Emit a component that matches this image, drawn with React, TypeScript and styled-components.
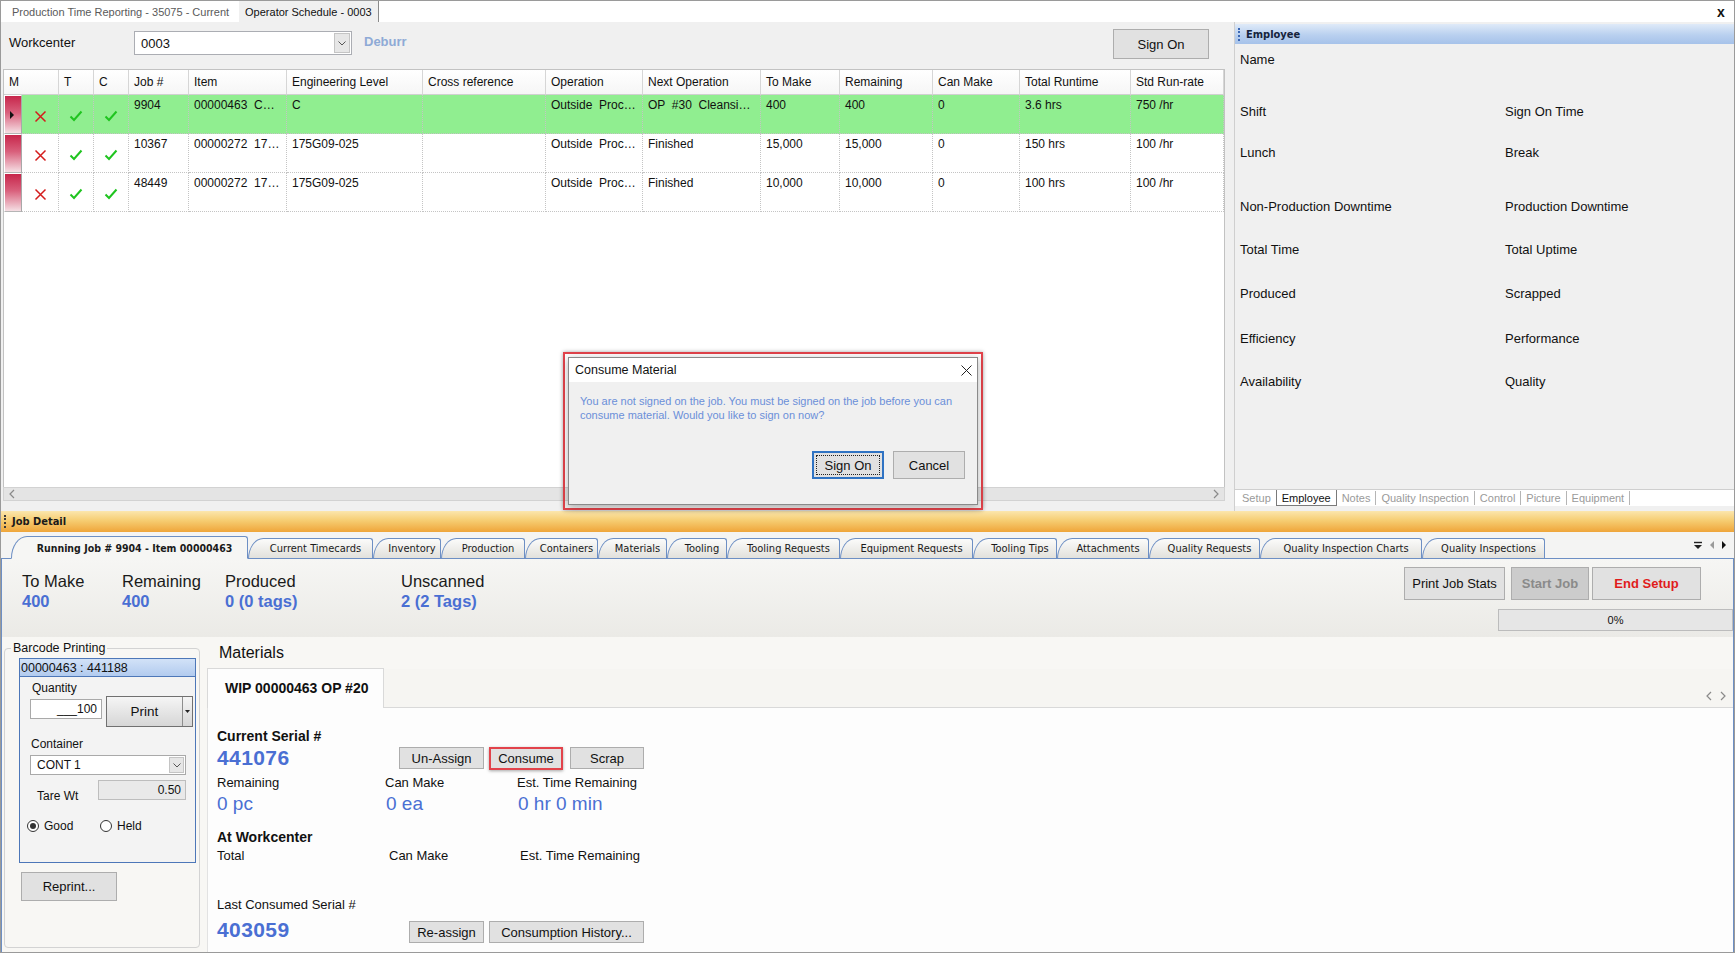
import React from "react";
import styled, { createGlobalStyle } from "styled-components";

const SANS = `"Liberation Sans", Arial, sans-serif`;
const TAHOMA = `"DejaVu Sans Condensed", "DejaVu Sans", "Liberation Sans", sans-serif`;
const BLUE = "#4a6fd3";
const TABLINE = "#6d8fc4";

const GlobalStyle = createGlobalStyle`
  html, body { margin: 0; padding: 0; background: #f0f0f0; }
  body { font-family: ${SANS}; color: #111; }
  *, *::before, *::after { box-sizing: border-box; }
`;

/* ---------- window ---------- */
const Window = styled.div`
  position: relative;
  width: 1735px;
  height: 953px;
  display: flex;
  flex-direction: column;
  background: #f0f0f0;
  border: 1px solid #9a9a9a;
  overflow: hidden;
  font-size: 13px;
`;

const DocTabs = styled.div`
  flex: none;
  height: 21px;
  display: flex;
  align-items: stretch;
  background: #fff;
  padding-left: 5px;
`;

const DocTab = styled.div<{ $active?: boolean }>`
  display: flex;
  align-items: center;
  padding: 0 6px;
  margin-left: ${(p) => (p.$active ? 4 : 0)}px;
  font-size: 11px;
  color: ${(p) => (p.$active ? "#111" : "#5a5a5a")};
  background: ${(p) => (p.$active ? "#f0f0f0" : "transparent")};
  border-right: ${(p) => (p.$active ? "1px solid #8a8a8a" : "none")};
  white-space: nowrap;
`;

const DocClose = styled.div`
  margin-left: auto;
  width: 24px;
  display: flex;
  align-items: center;
  justify-content: center;
  font-weight: 700;
  font-size: 14px;
  padding-right: 2px;
`;

/* ---------- upper area ---------- */
const Upper = styled.div`
  flex: none;
  height: 489px;
  display: flex;
`;

const LeftPane = styled.div`
  flex: none;
  width: 1224px;
  padding: 0 0 10px 2px;
  display: flex;
  flex-direction: column;
`;

const Toolbar = styled.div`
  flex: none;
  height: 47px;
  display: flex;
  align-items: flex-start;
`;

const WcLabel = styled.div`
  width: 125px;
  margin: 13px 0 0 6px;
  font-size: 13px;
  line-height: 16px;
`;

const Combo = styled.div`
  margin-top: 9px;
  width: 218px;
  height: 24px;
  display: flex;
  background: #fff;
  border: 1px solid #abadb3;
`;

const ComboText = styled.div`
  flex: 1;
  padding-left: 6px;
  display: flex;
  align-items: center;
  font-size: 13px;
`;

const ComboArrow = styled.div<{ $w?: number }>`
  width: ${(p) => p.$w ?? 16}px;
  margin: 1px;
  display: flex;
  align-items: center;
  justify-content: center;
  background: #e6e6e6;
  border: 1px solid #c4c4c4;
`;

const Deburr = styled.div`
  margin: 12px 0 0 12px;
  font-weight: 700;
  font-size: 13px;
  line-height: 16px;
  color: #8eaad6;
`;

const Btn = styled.button<{ $w: number; $h: number; $tone?: "red" | "disabled" }>`
  flex: none;
  width: ${(p) => p.$w}px;
  height: ${(p) => p.$h}px;
  padding: 0;
  font-family: ${SANS};
  font-size: 13px;
  font-weight: ${(p) => (p.$tone ? 700 : 400)};
  color: ${(p) => (p.$tone === "red" ? "#e01c1c" : p.$tone === "disabled" ? "#8a8a8a" : "#111")};
  background: ${(p) => (p.$tone === "disabled" ? "#cccccc" : "#e1e1e1")};
  border: 1px solid #adadad;
  cursor: default;
`;

const SignOnTop = styled(Btn)`
  margin: 7px 16px 0 auto;
`;

const COLS = "18px 37px 35px 35px 60px 98px 136px 123px 97px 118px 79px 93px 87px 111px 93px";

const GridBox = styled.div`
  flex: 1;
  display: grid;
  grid-template-columns: ${COLS};
  grid-auto-rows: min-content;
  align-content: start;
  background: #fff;
  border: 1px solid #c2c2c2;
  border-bottom: none;
  overflow: hidden;
`;

const HeadCell = styled.div<{ $span?: number }>`
  grid-column: span ${(p) => p.$span ?? 1};
  height: 25px;
  display: flex;
  align-items: center;
  padding-left: 5px;
  font-size: 12px;
  white-space: nowrap;
  background: linear-gradient(#ffffff, #f6f6f6);
  border-right: 1px solid #d6d6d6;
  border-bottom: 1px solid #d0d0d0;
`;

const Selector = styled.div`
  height: 39px;
  display: flex;
  align-items: center;
  padding-left: 5px;
  background: linear-gradient(180deg, #c7264b 0%, #d9607c 45%, #f5dfe4 100%);
  border: 1px solid #fff;
  border-right: 1px solid #a8a8a8;
  border-bottom: 1px solid #b5b5b5;
`;

const Pointer = styled.span`
  width: 0;
  height: 0;
  border-top: 4px solid transparent;
  border-bottom: 4px solid transparent;
  border-left: 4px solid #111;
`;

const Cell = styled.div<{ $hl?: boolean; $icon?: boolean }>`
  height: 39px;
  padding: ${(p) => (p.$icon ? "4px 0 0 0" : "3px 3px 0 5px")};
  display: ${(p) => (p.$icon ? "flex" : "block")};
  align-items: center;
  justify-content: center;
  font-size: 12px;
  line-height: 14px;
  white-space: pre;
  overflow: hidden;
  background: ${(p) => (p.$hl ? "#90ee90" : "#fff")};
  border-right: 1px dotted #c4c4c4;
  border-bottom: 1px dotted #c4c4c4;
`;

const HScroll = styled.div`
  flex: none;
  height: 14px;
  display: flex;
  align-items: center;
  justify-content: space-between;
  padding: 0 5px;
  background: #e4e4e4;
  border: 1px solid #d2d2d2;
`;

const Splitter = styled.div`
  flex: none;
  width: 9px;
`;

const RightPane = styled.div`
  flex: 1;
  display: flex;
  flex-direction: column;
  padding-top: 2px;
  border-left: 1px solid #cfcfcf;
`;

const PaneHeader = styled.div`
  flex: none;
  height: 20px;
  display: flex;
  align-items: center;
  gap: 6px;
  padding-left: 3px;
  background: linear-gradient(#dfeaf8, #b9d0ef 55%, #a6c2ea);
  font-family: ${TAHOMA};
  font-stretch: condensed;
  font-size: 11px;
  font-weight: 700;
  color: #15233c;
`;

const Grip = styled.span<{ $color: string }>`
  width: 0;
  height: 13px;
  border-left: 2px dotted ${(p) => p.$color};
`;

const EmpFields = styled.div`
  flex: 1;
  padding: 8px 0 0 5px;
`;

const EmpRow = styled.div<{ $h: number }>`
  height: ${(p) => p.$h}px;
  display: grid;
  grid-template-columns: 265px 1fr;
  font-size: 13px;
  line-height: 16px;
`;

const RightTabs = styled.div`
  flex: none;
  height: 17px;
  margin-bottom: 5px;
  display: flex;
  align-items: stretch;
  padding-left: 2px;
  background: #fff;
  border-top: 1px solid #cfcfcf;
`;

const RightTab = styled.div<{ $active?: boolean; $sep?: boolean }>`
  display: flex;
  align-items: center;
  padding: 0 5px;
  font-size: 11px;
  color: ${(p) => (p.$active ? "#111" : "#9a9a9a")};
  border-left: ${(p) => (p.$active ? "1px solid #7a7a7a" : "none")};
  border-right: ${(p) => (p.$active ? "1px solid #7a7a7a" : p.$sep ? "1px solid #b5b5b5" : "none")};
  border-bottom: ${(p) => (p.$active ? "1px solid #7a7a7a" : "none")};
  margin: ${(p) => (p.$active ? "0" : "1px 0")};
`;

/* ---------- job detail ---------- */
const DetailBar = styled.div`
  flex: none;
  height: 21px;
  display: flex;
  align-items: center;
  gap: 6px;
  padding-left: 3px;
  background: linear-gradient(#fbe6ad, #f6cd72 45%, #efa53a);
  font-family: ${TAHOMA};
  font-stretch: condensed;
  font-size: 11px;
  font-weight: 700;
  color: #1a1a1a;
`;

const TabStrip = styled.div`
  flex: none;
  height: 27px;
  display: flex;
  align-items: flex-end;
  padding-left: 10px;
  background: #f4f4f3;
  border-bottom: 1px solid ${TABLINE};
`;

const JTab = styled.div<{ $w: number; $active?: boolean }>`
  flex: none;
  position: relative;
  z-index: ${(p) => (p.$active ? 2 : 1)};
  width: ${(p) => p.$w}px;
  height: ${(p) => (p.$active ? 23 : 21)}px;
  margin-bottom: -1px;
  display: flex;
  align-items: center;
  justify-content: center;
  padding-left: 10px;
  border: 1px solid ${TABLINE};
  border-bottom: ${(p) => (p.$active ? "1px solid #f6f6f4" : `1px solid ${TABLINE}`)};
  border-radius: 16px 3px 0 0 / 22px 3px 0 0;
  background: ${(p) => (p.$active ? "#f6f6f4" : "linear-gradient(#fbfbfa, #e2e1dc)")};
  font-family: ${TAHOMA};
  font-stretch: condensed;
  font-size: ${(p) => (p.$active ? 10.5 : 11)}px;
  font-weight: ${(p) => (p.$active ? 700 : 400)};
  color: #1a1a1a;
  white-space: nowrap;
`;

const TabOverflow = styled.div`
  margin-left: auto;
  align-self: center;
  display: flex;
  align-items: center;
  gap: 6px;
  padding-right: 7px;
`;

const TabContent = styled.div`
  flex: 1;
  display: flex;
  flex-direction: column;
  border-left: 1px solid ${TABLINE};
  border-right: 1px solid ${TABLINE};
`;

const StatsArea = styled.div`
  flex: none;
  height: 78px;
  display: flex;
  background: linear-gradient(#f6f6f4, #ebeae6);
`;

const StatsLeft = styled.div`
  flex: 1;
  display: flex;
  padding: 13px 0 0 20px;
`;

const StatGroup = styled.div<{ $w: number }>`
  width: ${(p) => p.$w}px;
`;

const StatLabel = styled.div`
  font-size: 16.5px;
  line-height: 19px;
  color: #1a1a1a;
`;

const StatValue = styled.div`
  font-size: 16.5px;
  line-height: 20px;
  font-weight: 700;
  color: ${BLUE};
`;

const StatsRight = styled.div`
  padding-top: 8px;
  display: flex;
  flex-direction: column;
  align-items: flex-end;
`;

const StatBtns = styled.div`
  display: flex;
  margin-right: 32px;
`;

const Progress = styled.div`
  margin-top: 9px;
  width: 235px;
  height: 22px;
  display: flex;
  align-items: center;
  justify-content: center;
  font-size: 11px;
  background: #e6e6e6;
  border: 1px solid #bcbcbc;
`;

const Lower = styled.div`
  flex: 1;
  display: flex;
  padding-left: 2px;
  background: #f8f7f4;
`;

const Fieldset = styled.fieldset`
  flex: none;
  margin: 4px 0 0 0;
  width: 196px;
  height: 307px;
  min-width: 0;
  padding: 2px 3px 0 14px;
  border: 1px solid #d3d3d3;
  border-radius: 4px;
`;

const Legend = styled.legend`
  margin-left: -8px;
  padding: 0 2px;
  font-size: 12.5px;
  line-height: 15px;
`;

const BarPanel = styled.div`
  width: 177px;
  height: 205px;
  background: #f3f3f3;
  border: 1px solid #4d77b8;
`;

const PanelHead = styled.div`
  height: 18px;
  padding-left: 1px;
  display: flex;
  align-items: center;
  font-size: 12.5px;
  background: linear-gradient(#d2e2f7, #b2cbef);
  border-bottom: 1px solid #4d77b8;
`;

const PanelBody = styled.div`
  padding-left: 10px;
`;

const SmallLabel = styled.div<{ $mt: number; $pl?: number }>`
  margin-top: ${(p) => p.$mt}px;
  padding-left: ${(p) => p.$pl ?? 2}px;
  font-size: 12px;
  line-height: 14px;
`;

const QtyRow = styled.div`
  margin-top: 1px;
  display: flex;
  align-items: flex-start;
`;

const TextInput = styled.div<{ $w: number; $disabled?: boolean }>`
  width: ${(p) => p.$w}px;
  height: 20px;
  display: flex;
  align-items: center;
  justify-content: flex-end;
  padding-right: 4px;
  font-size: 12px;
  background: ${(p) => (p.$disabled ? "#e9e9e9" : "#fff")};
  border: 1px solid ${(p) => (p.$disabled ? "#bdbdbd" : "#a9a9a9")};
`;

const QtyInput = styled(TextInput)`
  margin-top: 3px;
`;

const SplitBtn = styled.div`
  margin-left: 4px;
  width: 87px;
  height: 31px;
  display: flex;
  border: 1px solid #707070;
  background: linear-gradient(#f5f5f5, #d6d6d6);
`;

const SplitMain = styled.div`
  flex: 1;
  display: flex;
  align-items: center;
  justify-content: center;
  font-size: 13.5px;
  border-right: 1px solid #8d8d8d;
`;

const SplitArrow = styled.div`
  width: 9px;
  display: flex;
  align-items: center;
  justify-content: center;
`;

const SelectBox = styled.div`
  margin-top: 4px;
  width: 156px;
  height: 20px;
  display: flex;
  background: #fff;
  border: 1px solid #a9a9a9;
`;

const SelectText = styled.div`
  flex: 1;
  padding-left: 6px;
  display: flex;
  align-items: center;
  font-size: 12px;
`;

const TareRow = styled.div`
  margin-top: 5px;
  display: flex;
  align-items: flex-start;
`;

const TareLabel = styled.div`
  width: 68px;
  padding: 9px 0 0 7px;
  font-size: 12px;
  line-height: 14px;
`;

const RadioRow = styled.div`
  margin: 15px 0 0 -3px;
  display: flex;
  align-items: center;
`;

const RadioItem = styled.label<{ $w?: number }>`
  width: ${(p) => (p.$w ? `${p.$w}px` : "auto")};
  display: flex;
  align-items: center;
  gap: 5px;
  font-size: 12px;
  line-height: 16px;
`;

const RadioCircle = styled.span<{ $checked?: boolean }>`
  width: 12px;
  height: 12px;
  border-radius: 50%;
  border: 1px solid #333;
  background: #fff;
  display: flex;
  align-items: center;
  justify-content: center;
  &::after {
    content: "";
    width: 6px;
    height: 6px;
    border-radius: 50%;
    background: ${(p) => (p.$checked ? "#333" : "transparent")};
  }
`;

const ReprintBtn = styled(Btn)`
  margin: 9px 0 0 2px;
`;

/* ---------- materials ---------- */
const MatCol = styled.div`
  flex: 1;
  margin-left: 7px;
  display: flex;
  flex-direction: column;
`;

const MatTitle = styled.div`
  flex: none;
  height: 32px;
  padding: 7px 0 0 12px;
  font-size: 16px;
  line-height: 18px;
`;

const MatTabs = styled.div`
  flex: none;
  height: 39px;
  display: flex;
  align-items: flex-end;
  background: #f6f5f2;
  border-bottom: 1px solid #d9d9d9;
`;

const WipTab = styled.div`
  width: 177px;
  height: 40px;
  margin-bottom: -1px;
  display: flex;
  align-items: center;
  padding: 0 0 1px 17px;
  background: #fdfdfd;
  border: 1px solid #d9d9d9;
  border-bottom: none;
  font-size: 14px;
  font-weight: 700;
`;

const MatArrows = styled.div`
  margin-left: auto;
  display: flex;
  gap: 8px;
  padding: 0 7px 6px 0;
`;

const MatContent = styled.div`
  flex: 1;
  padding: 20px 0 0 9px;
  background: #fdfdfd;
  border-left: 1px solid #e2e2e2;
`;

const BoldLabel = styled.div<{ $mt?: number }>`
  margin-top: ${(p) => p.$mt ?? 0}px;
  font-size: 14px;
  font-weight: 700;
  line-height: 16px;
`;

const PlainLabel = styled.div<{ $mt?: number }>`
  margin-top: ${(p) => p.$mt ?? 0}px;
  font-size: 13px;
  line-height: 16px;
`;

const ActionRow = styled.div<{ $h: number; $align: string }>`
  height: ${(p) => p.$h}px;
  display: flex;
  align-items: ${(p) => p.$align};
`;

const BigVal = styled.div<{ $w: number }>`
  width: ${(p) => p.$w}px;
  font-size: 21px;
  line-height: 24px;
  font-weight: 700;
  letter-spacing: 0.4px;
  color: ${BLUE};
  margin-bottom: 1px;
`;

const ThreeCol = styled.div<{ $cols: string; $mt: number }>`
  margin-top: ${(p) => p.$mt}px;
  display: grid;
  grid-template-columns: ${(p) => p.$cols};
  font-size: 13px;
  line-height: 16px;
`;

const MidValRow = styled(ThreeCol)`
  font-size: 19px;
  line-height: 22px;
  color: ${BLUE};
`;

const ConsumeBtn = styled(Btn)`
  border: 2px solid #e2434b;
  box-shadow: 0 1px 3px rgba(0, 0, 0, 0.35);
`;

/* ---------- dialog ---------- */
const Annot = styled.div`
  position: absolute;
  left: 562px;
  top: 351px;
  width: 420px;
  height: 158px;
  padding: 3px;
  border: 2px solid #e2434b;
  box-shadow: 0 0 4px rgba(0, 0, 0, 0.35);
`;

const Dialog = styled.div`
  width: 100%;
  height: 100%;
  display: flex;
  flex-direction: column;
  background: #f0f0f0;
  border: 1px solid #8a8a8a;
  box-shadow: 0 2px 8px rgba(0, 0, 0, 0.3);
`;

const DlgTitle = styled.div`
  flex: none;
  height: 24px;
  display: flex;
  align-items: center;
  justify-content: space-between;
  padding: 0 5px 0 6px;
  background: #fff;
  font-size: 12.5px;
`;

const DlgBody = styled.div`
  flex: 1;
  display: flex;
  flex-direction: column;
  padding: 12px 12px 0 11px;
`;

const DlgMsg = styled.div`
  font-size: 11px;
  line-height: 14px;
  color: #6b8fd9;
  white-space: nowrap;
`;

const DlgButtons = styled.div`
  margin-top: 29px;
  display: flex;
  justify-content: flex-end;
  gap: 9px;
`;

const DefaultBtn = styled(Btn)`
  position: relative;
  border: 2px solid #2f73c3;
  &::after {
    content: "";
    position: absolute;
    inset: 2px;
    border: 1px dotted #222;
  }
`;

/* ---------- icons ---------- */
const XIcon = () => (
  <svg width="13" height="13" viewBox="0 0 13 13">
    <path d="M1.5 1.5 L11.5 11.5 M11.5 1.5 L1.5 11.5" stroke="#d41c1c" strokeWidth="1.5" fill="none" />
  </svg>
);

const CheckIcon = () => (
  <svg width="14" height="12" viewBox="0 0 14 12">
    <path d="M1.5 6.5 L5 10 L12.5 1.5" stroke="#1fc41f" strokeWidth="2" fill="none" />
  </svg>
);

const Chevron = ({ color = "#555" }: { color?: string }) => (
  <svg width="8" height="5" viewBox="0 0 8 5">
    <path d="M0.5 0.5 L4 4 L7.5 0.5" stroke={color} strokeWidth="1" fill="none" />
  </svg>
);

const Thin = ({ dir }: { dir: "l" | "r" }) => (
  <svg width="6" height="10" viewBox="0 0 6 10">
    <path d={dir === "l" ? "M5 1 L1 5 L5 9" : "M1 1 L5 5 L1 9"} stroke="#8a8a8a" strokeWidth="1.2" fill="none" />
  </svg>
);

const Tri = ({ dir, color }: { dir: "l" | "r"; color: string }) => (
  <svg width="6" height="10" viewBox="0 0 6 10">
    <path d={dir === "l" ? "M5 1 L1 5 L5 9Z" : "M1 1 L5 5 L1 9Z"} fill={color} />
  </svg>
);

const MenuDrop = () => (
  <svg width="10" height="9" viewBox="0 0 10 9">
    <path d="M1 1.5 H9" stroke="#222" strokeWidth="1.4" />
    <path d="M1 4 H9 L5 8Z" fill="#222" />
  </svg>
);

const CloseThin = () => (
  <svg width="11" height="11" viewBox="0 0 11 11">
    <path d="M0.5 0.5 L10.5 10.5 M10.5 0.5 L0.5 10.5" stroke="#222" strokeWidth="1" />
  </svg>
);

/* ---------- data ---------- */
const HEADERS: [string, number?][] = [
  ["M", 2], ["T"], ["C"], ["Job #"], ["Item"], ["Engineering Level"], ["Cross reference"],
  ["Operation"], ["Next Operation"], ["To Make"], ["Remaining"], ["Can Make"], ["Total Runtime"], ["Std Run-rate"],
];

type JobRow = { cells: string[]; active?: boolean };

const ROWS: JobRow[] = [
  { active: true, cells: ["9904", "00000463  C…", "C", "", "Outside  Proc…", "OP  #30  Cleansi…", "400", "400", "0", "3.6 hrs", "750 /hr"] },
  { cells: ["10367", "00000272  17…", "175G09-025", "", "Outside  Proc…", "Finished", "15,000", "15,000", "0", "150 hrs", "100 /hr"] },
  { cells: ["48449", "00000272  17…", "175G09-025", "", "Outside  Proc…", "Finished", "10,000", "10,000", "0", "100 hrs", "100 /hr"] },
];

const EMP: [string, string, number][] = [
  ["Name", "", 52],
  ["Shift", "Sign On Time", 41],
  ["Lunch", "Break", 54],
  ["Non-Production Downtime", "Production Downtime", 43],
  ["Total Time", "Total Uptime", 44],
  ["Produced", "Scrapped", 45],
  ["Efficiency", "Performance", 43],
  ["Availability", "Quality", 16],
];

const RIGHT_TABS = ["Setup", "Employee", "Notes", "Quality Inspection", "Control", "Picture", "Equipment"];

const JOB_TABS: [string, number][] = [
  ["Running Job # 9904 - Item 00000463", 237],
  ["Current Timecards", 125],
  ["Inventory", 68],
  ["Production", 84],
  ["Containers", 73],
  ["Materials", 69],
  ["Tooling", 60],
  ["Tooling Requests", 113],
  ["Equipment Requests", 133],
  ["Tooling Tips", 84],
  ["Attachments", 92],
  ["Quality Requests", 111],
  ["Quality Inspection Charts", 162],
  ["Quality Inspections", 123],
];

const STATS: [string, string, number][] = [
  ["To Make", "400", 100],
  ["Remaining", "400", 103],
  ["Produced", "0 (0 tags)", 176],
  ["Unscanned", "2 (2 Tags)", 150],
];

export default function App() {
  return (
    <>
      <GlobalStyle />
      <Window>
        <DocTabs>
          <DocTab>Production Time Reporting - 35075 - Current</DocTab>
          <DocTab $active>Operator Schedule - 0003</DocTab>
          <DocClose>x</DocClose>
        </DocTabs>

        <Upper>
          <LeftPane>
            <Toolbar>
              <WcLabel>Workcenter</WcLabel>
              <Combo>
                <ComboText>0003</ComboText>
                <ComboArrow>
                  <Chevron />
                </ComboArrow>
              </Combo>
              <Deburr>Deburr</Deburr>
              <SignOnTop $w={96} $h={30}>Sign On</SignOnTop>
            </Toolbar>

            <GridBox>
              {HEADERS.map(([h, span]) => (
                <HeadCell key={h} $span={span}>{h}</HeadCell>
              ))}
              {ROWS.map((r) => (
                <React.Fragment key={r.cells[0]}>
                  <Selector>{r.active && <Pointer />}</Selector>
                  <Cell $hl={r.active} $icon><XIcon /></Cell>
                  <Cell $hl={r.active} $icon><CheckIcon /></Cell>
                  <Cell $hl={r.active} $icon><CheckIcon /></Cell>
                  {r.cells.map((v, j) => (
                    <Cell key={j} $hl={r.active}>{v}</Cell>
                  ))}
                </React.Fragment>
              ))}
            </GridBox>
            <HScroll>
              <Thin dir="l" />
              <Thin dir="r" />
            </HScroll>
          </LeftPane>

          <Splitter />

          <RightPane>
            <PaneHeader>
              <Grip $color="#3b67b5" />
              Employee
            </PaneHeader>
            <EmpFields>
              {EMP.map(([a, b, h]) => (
                <EmpRow key={a} $h={h}>
                  <span>{a}</span>
                  <span>{b}</span>
                </EmpRow>
              ))}
            </EmpFields>
            <RightTabs>
              {RIGHT_TABS.map((t, i) => (
                <RightTab key={t} $active={t === "Employee"} $sep={i > 1}>{t}</RightTab>
              ))}
            </RightTabs>
          </RightPane>
        </Upper>

        <DetailBar>
          <Grip $color="#3a3a3a" />
          Job Detail
        </DetailBar>

        <TabStrip>
          {JOB_TABS.map(([t, w], i) => (
            <JTab key={t} $w={w} $active={i === 0}>{t}</JTab>
          ))}
          <TabOverflow>
            <MenuDrop />
            <Tri dir="l" color="#9a9a9a" />
            <Tri dir="r" color="#111" />
          </TabOverflow>
        </TabStrip>

        <TabContent>
          <StatsArea>
            <StatsLeft>
              {STATS.map(([l, v, w]) => (
                <StatGroup key={l} $w={w}>
                  <StatLabel>{l}</StatLabel>
                  <StatValue>{v}</StatValue>
                </StatGroup>
              ))}
            </StatsLeft>
            <StatsRight>
              <StatBtns>
                <Btn $w={101} $h={33}>Print Job Stats</Btn>
                <Btn $w={78} $h={33} $tone="disabled" style={{ marginLeft: 6 }}>Start Job</Btn>
                <Btn $w={109} $h={33} $tone="red" style={{ marginLeft: 3 }}>End Setup</Btn>
              </StatBtns>
              <Progress>0%</Progress>
            </StatsRight>
          </StatsArea>

          <Lower>
            <Fieldset>
              <Legend>Barcode Printing</Legend>
              <BarPanel>
                <PanelHead>00000463 : 441188</PanelHead>
                <PanelBody>
                  <SmallLabel $mt={4}>Quantity</SmallLabel>
                  <QtyRow>
                    <QtyInput $w={72}>___100</QtyInput>
                    <SplitBtn>
                      <SplitMain>Print</SplitMain>
                      <SplitArrow>
                        <svg width="5" height="3" viewBox="0 0 5 3"><path d="M0 0H5L2.5 3Z" fill="#222" /></svg>
                      </SplitArrow>
                    </SplitBtn>
                  </QtyRow>
                  <SmallLabel $mt={10} $pl={1}>Container</SmallLabel>
                  <SelectBox>
                    <SelectText>CONT 1</SelectText>
                    <ComboArrow $w={15}>
                      <Chevron />
                    </ComboArrow>
                  </SelectBox>
                  <TareRow>
                    <TareLabel>Tare Wt</TareLabel>
                    <TextInput $w={88} $disabled>0.50</TextInput>
                  </TareRow>
                  <RadioRow>
                    <RadioItem $w={73}>
                      <RadioCircle $checked />
                      Good
                    </RadioItem>
                    <RadioItem>
                      <RadioCircle />
                      Held
                    </RadioItem>
                  </RadioRow>
                </PanelBody>
              </BarPanel>
              <ReprintBtn $w={96} $h={29}>Reprint...</ReprintBtn>
            </Fieldset>

            <MatCol>
              <MatTitle>Materials</MatTitle>
              <MatTabs>
                <WipTab>WIP 00000463 OP #20</WipTab>
                <MatArrows>
                  <Thin dir="l" />
                  <Thin dir="r" />
                </MatArrows>
              </MatTabs>
              <MatContent>
                <BoldLabel>Current Serial #</BoldLabel>
                <ActionRow $h={28} $align="center">
                  <BigVal $w={182}>441076</BigVal>
                  <Btn $w={85} $h={22}>Un-Assign</Btn>
                  <ConsumeBtn $w={74} $h={23} style={{ marginLeft: 5 }}>Consume</ConsumeBtn>
                  <Btn $w={74} $h={22} style={{ marginLeft: 7 }}>Scrap</Btn>
                </ActionRow>
                <ThreeCol $cols="168px 132px 1fr" $mt={3}>
                  <span>Remaining</span>
                  <span>Can Make</span>
                  <span>Est. Time Remaining</span>
                </ThreeCol>
                <MidValRow $cols="169px 132px 1fr" $mt={2}>
                  <span>0 pc</span>
                  <span>0 ea</span>
                  <span>0 hr 0 min</span>
                </MidValRow>
                <BoldLabel $mt={14}>At Workcenter</BoldLabel>
                <ThreeCol $cols="172px 131px 1fr" $mt={3}>
                  <span>Total</span>
                  <span>Can Make</span>
                  <span>Est. Time Remaining</span>
                </ThreeCol>
                <PlainLabel $mt={33}>Last Consumed Serial #</PlainLabel>
                <ActionRow $h={30} $align="flex-end">
                  <BigVal $w={192}>403059</BigVal>
                  <Btn $w={75} $h={22}>Re-assign</Btn>
                  <Btn $w={155} $h={22} style={{ marginLeft: 5 }}>Consumption History...</Btn>
                </ActionRow>
              </MatContent>
            </MatCol>
          </Lower>
        </TabContent>

        <Annot>
          <Dialog>
            <DlgTitle>
              <span>Consume Material</span>
              <CloseThin />
            </DlgTitle>
            <DlgBody>
              <DlgMsg>
                You are not signed on the job. You must be signed on the job before you can
                <br />
                consume material. Would you like to sign on now?
              </DlgMsg>
              <DlgButtons>
                <DefaultBtn $w={72} $h={28}>Sign On</DefaultBtn>
                <Btn $w={72} $h={28}>Cancel</Btn>
              </DlgButtons>
            </DlgBody>
          </Dialog>
        </Annot>
      </Window>
    </>
  );
}
